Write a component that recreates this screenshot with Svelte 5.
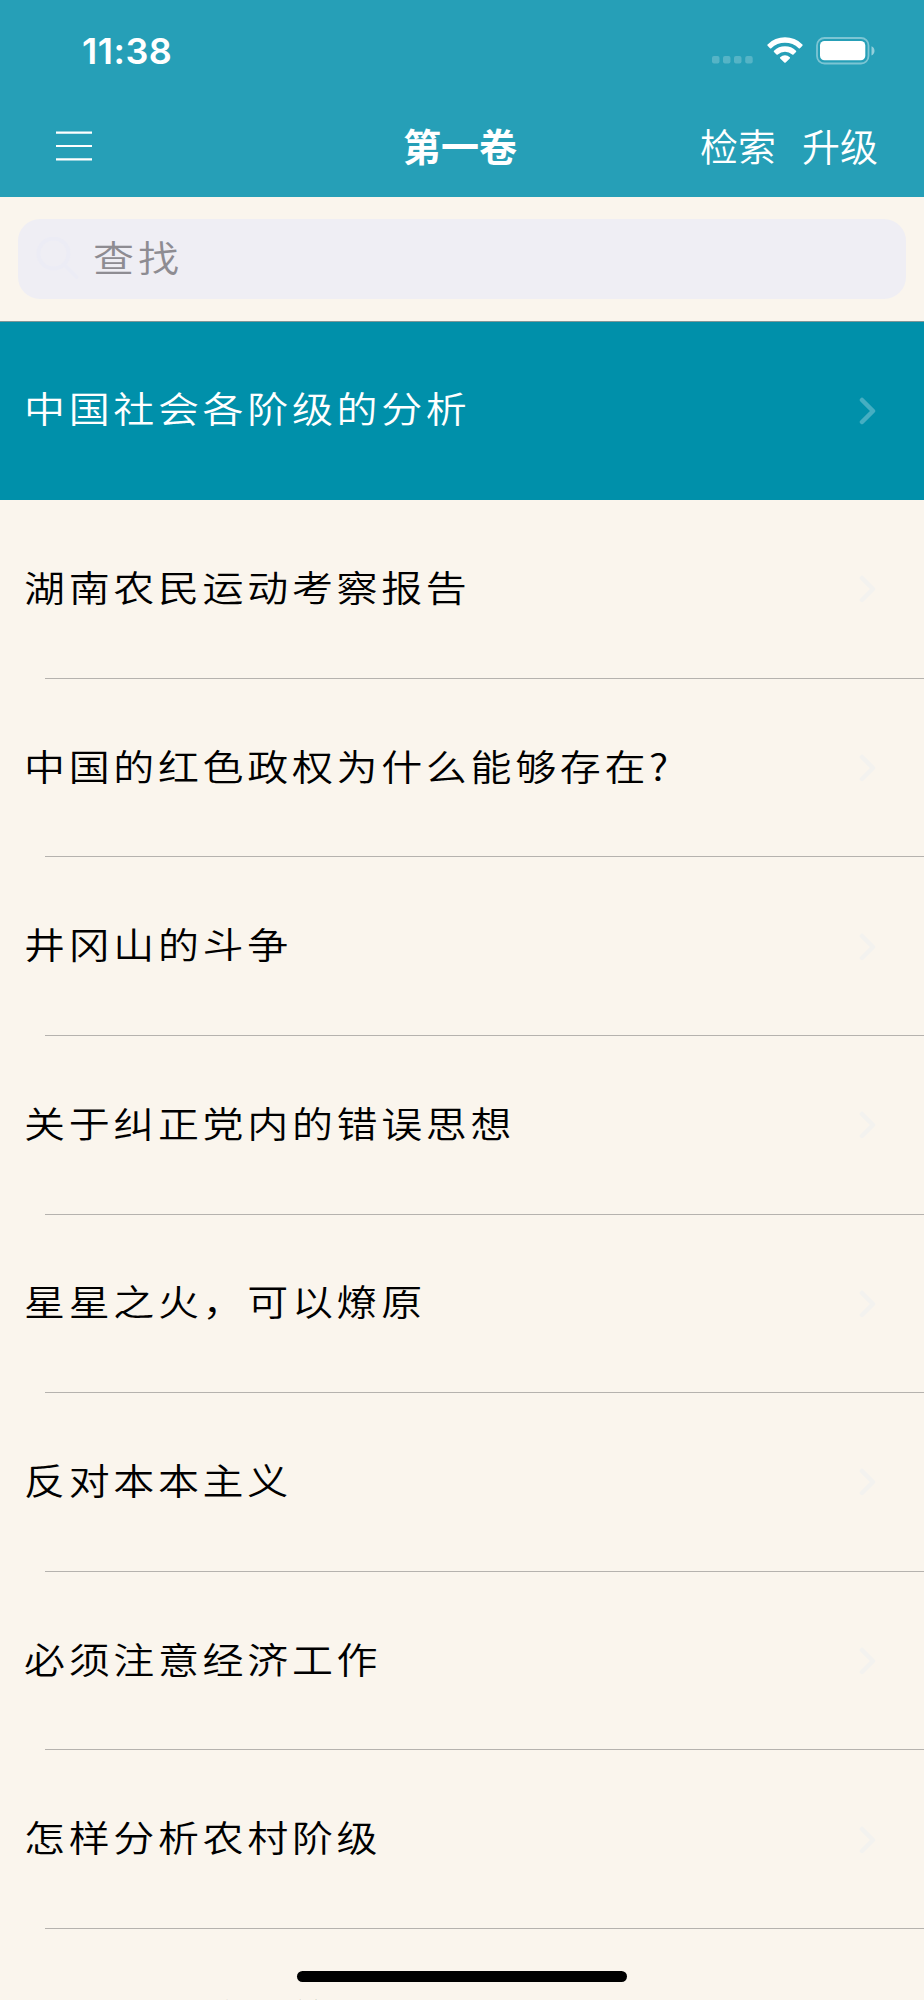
<script lang="ts">
    let volume = "第一卷";
    let keyword = "";
    let selected = 0;

    const articles = [
        "中国社会各阶级的分析",
        "湖南农民运动考察报告",
        "中国的红色政权为什么能够存在?",
        "井冈山的斗争",
        "关于纠正党内的错误思想",
        "星星之火，可以燎原",
        "反对本本主义",
        "必须注意经济工作",
        "怎样分析农村阶级",
        "我们的经济政策"
    ];
</script>

<div class="screen">
    <header>
        <div class="status_bar">
            <span class="time">11:38</span>
            <div class="status_icons">
                <svg class="dots" width="42" height="8" viewBox="0 0 42 8">
                    <rect x="0" y="0" width="7.5" height="7.5" rx="2" />
                    <rect x="11" y="0" width="7.5" height="7.5" rx="2" />
                    <rect x="22" y="0" width="7.5" height="7.5" rx="2" />
                    <rect x="33.2" y="0" width="7.5" height="7.5" rx="2" />
                </svg>
                <svg class="wifi" width="36" height="27" viewBox="0 0 36 27">
                    <path d="M0.6 7.4a24.8 24.8 0 0 1 34.8 0q.6.7 0 1.4l-2.4 2.4q-.6.6-1.3 0a19.8 19.8 0 0 0-27.4 0q-.7.6-1.3 0L.6 8.8q-.6-.7 0-1.4z" />
                    <path d="M7 13.8a15.8 15.8 0 0 1 22 0q.6.7 0 1.3l-2.5 2.5q-.6.5-1.3 0a10.4 10.4 0 0 0-14.4 0q-.7.5-1.3 0L7 15.1q-.6-.6 0-1.3z" />
                    <path d="M13.2 20.2a7.2 7.2 0 0 1 9.6 0q.6.6 0 1.2l-4.1 4.1q-.7.6-1.4 0l-4.1-4.1q-.6-.6 0-1.2z" />
                </svg>
                <svg class="battery" width="60" height="28" viewBox="0 0 60 28">
                    <rect x="1" y="1" width="51.5" height="25.5" rx="7.5" fill="none" stroke="#fff" stroke-width="1.8" opacity=".4" />
                    <rect x="4" y="4" width="45.3" height="19.3" rx="4.5" fill="#fff" />
                    <path d="M55.5 9.2c4 1.4 4 7.8 0 9.2z" fill="#fff" opacity=".5" />
                </svg>
            </div>
        </div>
        <nav>
            <button class="menu" aria-label="menu">
                <svg width="36" height="30" viewBox="0 0 36 30">
                    <path d="M0 1.7h36M0 15h36M0 28.4h36" stroke="#fff" stroke-width="2.2" />
                </svg>
            </button>
            <h1>{volume}</h1>
            <div class="actions">
                <button>检索</button>
                <button>升级</button>
            </div>
        </nav>
    </header>

    <div class="search_wrap">
        <label class="search_box">
            <svg width="44" height="44" viewBox="0 0 44 44" fill="none" stroke="#ececf5" stroke-width="4" stroke-linecap="round">
                <circle cx="17.5" cy="16.5" r="15" />
                <path d="M28.5 28l12 12" />
            </svg>
            <input type="text" placeholder="查找" bind:value={keyword} />
        </label>
    </div>

    <ul>
        {#each articles as article, i}
            <li class:active={selected === i}>
                <button class="row" on:click={() => (selected = i)}>
                    <span class="title">{article}</span>
                    <svg class="arrow" width="18" height="28" viewBox="0 0 18 28">
                        <path d="M3 3l11 11L3 25" />
                    </svg>
                </button>
            </li>
        {/each}
    </ul>

    <div class="home_bar"></div>
</div>

<style>
    :global(body) {
        background: #faf5ed;
    }

    .screen {
        position: relative;
        width: 924px;
        height: 2000px;
        overflow: hidden;
        background: #faf5ed;
        font-family: "Noto Sans CJK SC", sans-serif;
    }

    button {
        border: none;
        background: none;
        padding: 0;
        font: inherit;
        color: inherit;
        cursor: pointer;
    }

    svg {
        display: block;
        flex: none;
    }

    header {
        height: 197px;
        box-sizing: border-box;
        background: #269fb7;
        color: #fff;
    }

    .status_bar {
        height: 101px;
        display: flex;
        justify-content: space-between;
        align-items: center;
        padding: 0 48px 0 82px;
    }

    .time {
        font-family: Inter, sans-serif;
        font-size: 36px;
        font-weight: 600;
        letter-spacing: 0.5px;
    }

    .status_icons {
        display: flex;
        align-items: center;
    }

    .dots {
        margin: 18px 13px 0 0;
        fill: rgba(255, 255, 255, 0.22);
    }

    .wifi {
        margin-right: 13px;
        fill: #fff;
    }

    nav {
        height: 90px;
        display: grid;
        grid-template-columns: 1fr auto 1fr;
        align-items: center;
        padding: 0 46px 0 56px;
    }

    .menu {
        justify-self: start;
    }

    h1 {
        margin: 0 0 3px -14px;
        font-size: 38px;
        font-weight: 700;
        line-height: 56px;
    }

    .actions {
        justify-self: end;
        display: flex;
        gap: 26px;
        margin-bottom: 2px;
        font-size: 38px;
        font-weight: 350;
        line-height: 56px;
    }

    .search_wrap {
        height: 124.6px;
        box-sizing: border-box;
        padding: 22px 18px;
        border-bottom: 1px solid #7d9698;
    }

    .search_box {
        display: flex;
        align-items: center;
        height: 80px;
        box-sizing: border-box;
        padding: 0 18px;
        border-radius: 22px;
        background: #efeef4;
    }

    input {
        flex: 1;
        margin: 0 0 7px 13px;
        padding: 0;
        border: none;
        outline: none;
        background: none;
        font-family: inherit;
        font-size: 41px;
        font-weight: 350;
        letter-spacing: 4px;
        transform: scaleY(0.9);
    }

    input::placeholder {
        color: #8e8c92;
        opacity: 1;
    }

    ul {
        margin: 0;
        padding: 0;
        list-style: none;
    }

    li {
        height: 178.6px;
        box-sizing: border-box;
        background: linear-gradient(#b5b2ae, #b5b2ae) 45px 100% / 100% 1px no-repeat;
    }

    li.active {
        background: #0090aa;
        color: #fff;
    }

    .row {
        width: 100%;
        height: 100%;
        display: flex;
        justify-content: space-between;
        align-items: center;
        padding: 0 47px 0 24px;
    }

    /* wide, slightly flattened clerical-script proportions */
    .title {
        margin-bottom: 7px;
        font-size: 41px;
        font-weight: 350;
        line-height: 56px;
        letter-spacing: 3.65px;
        white-space: nowrap;
        transform: scaleY(0.88);
    }

    .arrow path {
        fill: none;
        stroke: #f3f2ef;
        stroke-width: 4.5;
        stroke-linecap: round;
        stroke-linejoin: round;
    }

    .active .arrow path {
        stroke: #45aec2;
    }

    .home_bar {
        position: absolute;
        left: 297px;
        bottom: 18px;
        width: 330px;
        height: 11px;
        border-radius: 6px;
        background: #000;
    }
</style>
